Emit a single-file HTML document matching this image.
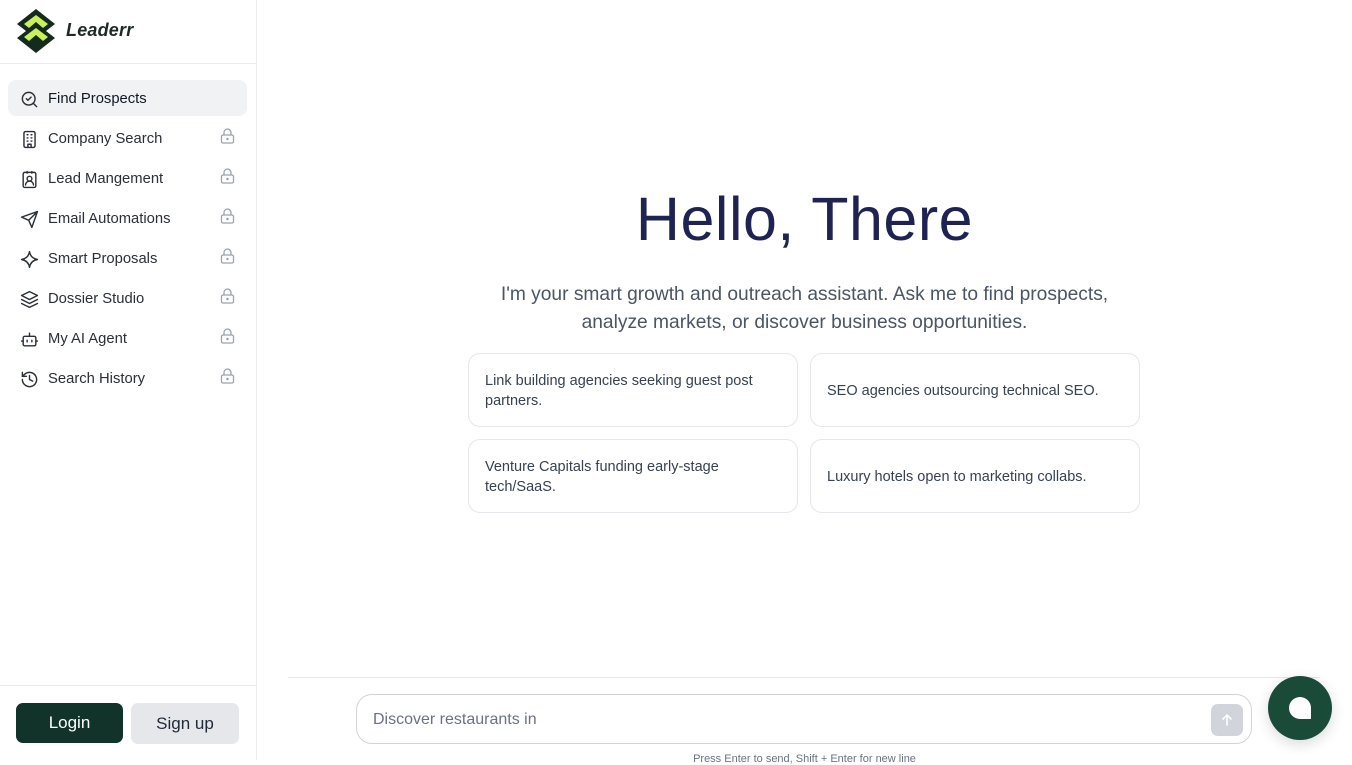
<!DOCTYPE html>
<html><head><meta charset="utf-8"><style>
*{box-sizing:border-box;margin:0;padding:0}
body{width:1352px;height:760px;overflow:hidden;font-family:"Liberation Sans",sans-serif;background:#fff;position:relative;color:#1f2937}
.sb{position:absolute;left:0;top:0;width:257px;height:760px;border-right:1px solid #ececec}
.hd{height:64px;border-bottom:1px solid #ececec;position:relative}
.logo-t{position:absolute;left:66px;top:20px;font-size:18px;font-weight:bold;font-style:italic;color:#1f2a25;letter-spacing:0.2px}
.nav{position:absolute;left:8px;top:80px;width:239px}
.it{height:36px;margin-bottom:4px;border-radius:8px;display:flex;align-items:center;padding-left:12px;padding-top:2px;font-size:14.8px;color:#2b2f36;position:relative}
.it.a{background:#f1f2f4;color:#111827}
.it svg.i{width:19px;height:19px;margin-right:9px;fill:none;stroke:#2b2f36;stroke-width:1.8;stroke-linecap:round;stroke-linejoin:round}
.lk{position:absolute;right:12px;top:8px;width:15px;height:16px}
.ft{position:absolute;left:0;top:685px;width:256px;border-top:1px solid #ececec;height:75px}
.btn{position:absolute;top:17px;height:40px;border-radius:7px;font-size:17px;display:flex;align-items:center;justify-content:center}
h1{position:absolute;left:257px;width:1095px;top:184px;text-align:center;font-weight:normal;font-size:61px;color:#1f2352;letter-spacing:0.5px}
.sub{position:absolute;left:257px;width:1095px;top:281px;text-align:center;font-size:19.2px;line-height:28px;color:#4b5563}
.c{position:absolute;width:330px;height:74px;border:1px solid #e5e7eb;border-radius:12px;padding:0 16px;display:flex;align-items:center;font-size:14.5px;line-height:20px;color:#374151;padding-top:2px}
.div{position:absolute;left:288px;top:677px;width:1032px;border-top:1px solid #e5e7eb}
.inp{position:absolute;left:356px;top:694px;width:896px;height:50px;border:1px solid #d4d4d8;border-radius:16px}
.ph{position:absolute;left:16px;top:16px;font-size:16px;color:#6b7280}
.send{position:absolute;right:8px;top:9px;width:32px;height:32px;border-radius:7px;background:#d1d5db;display:flex;align-items:center;justify-content:center}
.chat{position:absolute;left:1268px;top:676px;width:64px;height:64px;border-radius:50%;background:#1a4a38;box-shadow:0 4px 14px rgba(0,0,0,.15)}
.hint{position:absolute;left:257px;width:1095px;top:753px;text-align:center;font-size:11px;color:#6b7280}
</style></head><body>
<div class="sb">
 <div class="hd">
  <svg style="position:absolute;left:15px;top:8px" width="42" height="46" viewBox="0 0 42 46">
   <path d="M21 1 L40 16 L31 23 L40 30 L21 45 L2 30 L11 23 L2 16 Z" fill="#142a1f"/>
   <path d="M21 7 L33 16 L28 20 L21 14 L14 20 L9 16 Z" fill="#c9f05a"/>
   <path d="M21 20 L33 29 L28 33 L21 27 L14 33 L9 29 Z" fill="#c9f05a"/>
  </svg>
  <div class="logo-t">Leaderr</div>
 </div>
 <div class="nav">
  <div class="it a"><svg class="i" viewBox="0 0 24 24"><circle cx="11" cy="11" r="8"/><path d="M21 21l-4.3-4.3M8 11l2 2 4-4"/></svg>Find Prospects</div>
  <div class="it"><svg class="i" viewBox="0 0 24 24"><rect x="5" y="2" width="14" height="20" rx="2"/><path d="M9 6h1M14 6h1M9 10h1M14 10h1M9 14h1M14 14h1M10 22v-4h4v4"/></svg>Company Search<svg class="lk" viewBox="0 0 15 16" fill="none" stroke="#9ca3af" stroke-width="1.3"><rect x="1.5" y="7" width="12" height="8" rx="1.5"/><path d="M4 7V4.5a3.5 3.5 0 0 1 7 0V7"/><circle cx="7.5" cy="11" r=".6" fill="#9ca3af"/></svg></div>
  <div class="it"><svg class="i" viewBox="0 0 24 24"><rect x="4" y="3" width="16" height="19" rx="2"/><path d="M9 2v2M15 2v2"/><circle cx="12" cy="11" r="3"/><path d="M7 19a5 5 0 0 1 10 0"/></svg>Lead Mangement<svg class="lk" viewBox="0 0 15 16" fill="none" stroke="#9ca3af" stroke-width="1.3"><rect x="1.5" y="7" width="12" height="8" rx="1.5"/><path d="M4 7V4.5a3.5 3.5 0 0 1 7 0V7"/><circle cx="7.5" cy="11" r=".6" fill="#9ca3af"/></svg></div>
  <div class="it"><svg class="i" viewBox="0 0 24 24"><path d="M22 2L11 13M22 2l-7 20-4-9-9-4z"/></svg>Email Automations<svg class="lk" viewBox="0 0 15 16" fill="none" stroke="#9ca3af" stroke-width="1.3"><rect x="1.5" y="7" width="12" height="8" rx="1.5"/><path d="M4 7V4.5a3.5 3.5 0 0 1 7 0V7"/><circle cx="7.5" cy="11" r=".6" fill="#9ca3af"/></svg></div>
  <div class="it"><svg class="i" viewBox="0 0 24 24"><path d="M12 2c1 6 4 9 10 10-6 1-9 4-10 10-1-6-4-9-10-10 6-1 9-4 10-10z"/></svg>Smart Proposals<svg class="lk" viewBox="0 0 15 16" fill="none" stroke="#9ca3af" stroke-width="1.3"><rect x="1.5" y="7" width="12" height="8" rx="1.5"/><path d="M4 7V4.5a3.5 3.5 0 0 1 7 0V7"/><circle cx="7.5" cy="11" r=".6" fill="#9ca3af"/></svg></div>
  <div class="it"><svg class="i" viewBox="0 0 24 24"><path d="M12 2L2 7l10 5 10-5z"/><path d="M2 12l10 5 10-5M2 17l10 5 10-5"/></svg>Dossier Studio<svg class="lk" viewBox="0 0 15 16" fill="none" stroke="#9ca3af" stroke-width="1.3"><rect x="1.5" y="7" width="12" height="8" rx="1.5"/><path d="M4 7V4.5a3.5 3.5 0 0 1 7 0V7"/><circle cx="7.5" cy="11" r=".6" fill="#9ca3af"/></svg></div>
  <div class="it"><svg class="i" viewBox="0 0 24 24"><rect x="4" y="8" width="16" height="12" rx="2"/><path d="M12 8V4M2 14h2M20 14h2M9 13v2M15 13v2"/></svg>My AI Agent<svg class="lk" viewBox="0 0 15 16" fill="none" stroke="#9ca3af" stroke-width="1.3"><rect x="1.5" y="7" width="12" height="8" rx="1.5"/><path d="M4 7V4.5a3.5 3.5 0 0 1 7 0V7"/><circle cx="7.5" cy="11" r=".6" fill="#9ca3af"/></svg></div>
  <div class="it"><svg class="i" viewBox="0 0 24 24"><path d="M3 12a9 9 0 1 0 3-6.7L3 8"/><path d="M3 3v5h5M12 7v5l4 2"/></svg>Search History<svg class="lk" viewBox="0 0 15 16" fill="none" stroke="#9ca3af" stroke-width="1.3"><rect x="1.5" y="7" width="12" height="8" rx="1.5"/><path d="M4 7V4.5a3.5 3.5 0 0 1 7 0V7"/><circle cx="7.5" cy="11" r=".6" fill="#9ca3af"/></svg></div>
 </div>
 <div class="ft">
  <div class="btn" style="left:16px;width:107px;background:#12332a;color:#fff">Login</div>
  <div class="btn" style="left:131px;width:108px;background:#e5e7eb;color:#1f2937;top:17px;height:41px">Sign up</div>
 </div>
</div>
<h1>Hello, There</h1>
<div class="sub">I'm your smart growth and outreach assistant. Ask me to find prospects,<br>analyze markets, or discover business opportunities.</div>
<div class="c" style="left:468px;top:353px">Link building agencies seeking guest post partners.</div>
<div class="c" style="left:810px;top:353px">SEO agencies outsourcing technical SEO.</div>
<div class="c" style="left:468px;top:439px">Venture Capitals funding early-stage tech/SaaS.</div>
<div class="c" style="left:810px;top:439px">Luxury hotels open to marketing collabs.</div>
<div class="div"></div>
<div class="inp"><div class="ph">Discover restaurants in</div><div class="send"><svg width="14" height="14" viewBox="0 0 14 14" fill="none" stroke="#fff" stroke-width="1.6" stroke-linecap="round"><path d="M7 12V2M3 6l4-4 4 4"/></svg></div></div>
<div class="hint">Press Enter to send, Shift + Enter for new line</div>
<div class="chat"><svg style="position:absolute;left:20px;top:20px" width="24" height="24" viewBox="0 0 24 24"><path d="M12 1a11 11 0 1 0 0 22h11V12A11 11 0 0 0 12 1z" fill="#fff"/></svg></div>
</body></html>
